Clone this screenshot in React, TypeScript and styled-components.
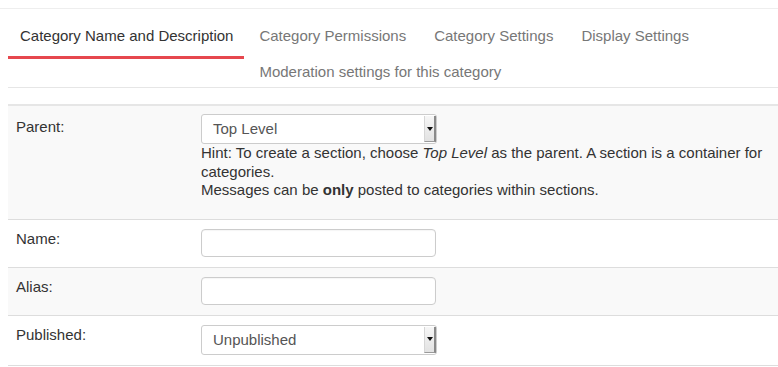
import React from "react";
import styled, { createGlobalStyle } from "styled-components";

const GlobalStyle = createGlobalStyle`
  body {
    margin: 0;
    background: #fff;
    font-family: "Liberation Sans", Arial, sans-serif;
    color: #333;
  }
`;

const Page = styled.div`
  margin-top: 8px;
  border-top: 1px solid #eee;
`;

const TabList = styled.ul`
  display: flow-root;
  list-style: none;
  margin: 0 0 16px 8px;
  padding: 6px 0 0;
  border-bottom: 1px solid #e6e6e6;
`;

const Tab = styled.li<{ active?: boolean }>`
  float: left;
  margin-right: 2px;
  padding: ${(p) => (p.active ? "11px 11px 10px 12px" : "11px 13px 5px")};
  font-size: 15px;
  line-height: 20px;
  color: ${(p) => (p.active ? "#333" : "#777")};
  border-bottom: ${(p) => (p.active ? "3px solid #e6474e" : "none")};
  cursor: pointer;
`;

const FormTable = styled.div`
  margin-left: 8px;
  border-top: 2px solid #e6e6e6;
`;

const Row = styled.div<{ shaded?: boolean }>`
  display: grid;
  grid-template-columns: 185px 1fr;
  background: ${(p) => (p.shaded ? "#f9f9f9" : "#fff")};
  border-bottom: 1px solid #ddd;
`;

const Cell = styled.div<{ tight?: boolean }>`
  padding: ${(p) => (p.tight ? "8px 8px 9px" : "9px 8px 10px")};
  font-size: 15px;
  line-height: 20px;
`;

const Label = styled.div<{ offset?: number }>`
  padding-top: ${(p) => p.offset || 0}px;
  color: #333;
`;

const TextInput = styled.input`
  display: block;
  box-sizing: border-box;
  width: 235px;
  height: 28px;
  border: 1px solid #ccc;
  border-radius: 4px;
  background: #fff;
  box-shadow: inset 0 1px 1px rgba(0, 0, 0, 0.04);
`;

const FakeSelect = styled.div`
  display: flex;
  align-items: stretch;
  box-sizing: border-box;
  width: 236px;
  height: 30px;
  border: 1px solid #ccc;
  border-radius: 3px;
  background: #fff;
`;

const SelectText = styled.span`
  flex: 1;
  align-self: center;
  padding-left: 11px;
  font-size: 15px;
  color: #555;
`;

const ArrowButton = styled.span`
  display: flex;
  align-items: center;
  justify-content: center;
  width: 9px;
  margin: 1px 0;
  background: linear-gradient(#f6f6f6, #e2e2e2);
  border-left: 1px solid #d6d6d6;
  border-right: 2px solid #8a8a8a;
  border-bottom: 1px solid #9a9a9a;
`;

const Hint = styled.div`
  margin-bottom: 10px;
  font-size: 15px;
  line-height: 18.5px;
  color: #333;
`;

const Select = ({ value }: { value: string }) => (
  <FakeSelect>
    <SelectText>{value}</SelectText>
    <ArrowButton>
      <svg width="6" height="4" viewBox="0 0 6 4">
        <polygon points="0,0 6,0 3,4" fill="#111" />
      </svg>
    </ArrowButton>
  </FakeSelect>
);

const tabs = [
  "Category Name and Description",
  "Category Permissions",
  "Category Settings",
  "Display Settings",
  "Moderation settings for this category",
];

const App = () => {
  return (
    <Page>
      <GlobalStyle />
      <TabList>
        {tabs.map((t, i) => (
          <Tab key={t} active={i === 0}>
            {t}
          </Tab>
        ))}
      </TabList>

      <FormTable>
        <Row shaded>
          <Cell tight>
            <Label offset={3}>Parent:</Label>
          </Cell>
          <Cell tight>
            <Select value="Top Level" />
            <Hint>
              Hint: To create a section, choose <em>Top Level</em> as the
              parent. A section is a container for categories.
              <br />
              Messages can be <strong>only</strong> posted to categories within
              sections.
            </Hint>
          </Cell>
        </Row>
        <Row>
          <Cell>
            <Label>Name:</Label>
          </Cell>
          <Cell>
            <TextInput type="text" />
          </Cell>
        </Row>
        <Row shaded>
          <Cell>
            <Label>Alias:</Label>
          </Cell>
          <Cell>
            <TextInput type="text" />
          </Cell>
        </Row>
        <Row>
          <Cell>
            <Label>Published:</Label>
          </Cell>
          <Cell>
            <Select value="Unpublished" />
          </Cell>
        </Row>
      </FormTable>
    </Page>
  );
};

export default App;
